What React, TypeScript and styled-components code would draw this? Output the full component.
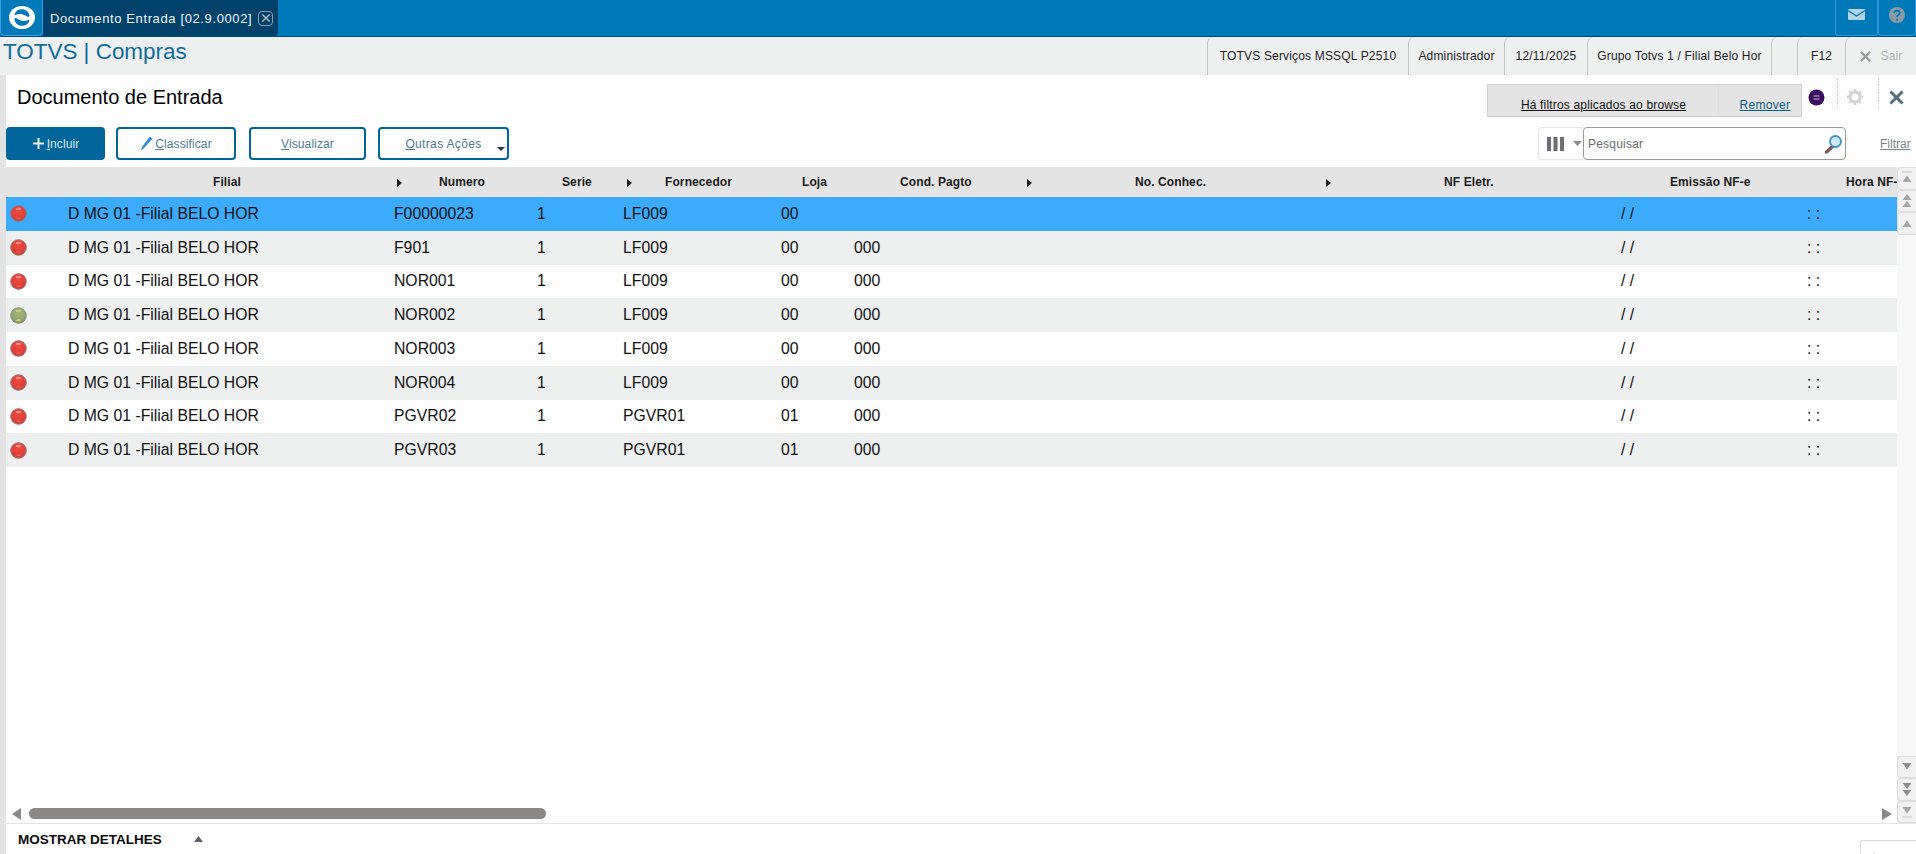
import React from "react";
import styled, { createGlobalStyle } from "styled-components";

const Global = createGlobalStyle`
  html, body { margin: 0; padding: 0; height: 100%; overflow: hidden; background: #eef0f0; }
  * { box-sizing: border-box; }
  body { font-family: "Liberation Sans", Arial, sans-serif; }
`;

const Page = styled.div`
  width: 1916px; height: 854px; display: flex; flex-direction: column; overflow: hidden;
`;

/* ---------- top bar ---------- */
const TopBar = styled.header`
  height: 37px; flex: none; display: flex; background: #0079b8; border-bottom: 1px solid #004a73;
`;
const LogoTile = styled.div`
  width: 43px; height: 36px; display: flex; align-items: center; justify-content: center;
  border: 1px solid #3a9fdc; border-top: none; border-radius: 0 0 5px 5px; background: #0079b8;
`;
const Tab = styled.div`
  width: 235px; height: 36px; display: flex; align-items: center; padding-left: 7px; gap: 6px;
  background: #00426b; color: #f2f6f8; font-size: 13px; letter-spacing: .62px; white-space: nowrap;
  border-radius: 0 0 4px 0;
`;
const TabClose = styled.span`
  width: 15px; height: 15px; display: flex; align-items: center; justify-content: center;
  border: 1.5px solid #8e9aa3; border-radius: 4px; color: #a9b3ba;
`;
const TopRight = styled.div`
  margin-left: auto; display: flex;
`;
const TopBtn = styled.div<{ $w: number }>`
  width: ${(p) => p.$w}px; height: 36px; display: flex; align-items: center; justify-content: center; padding-bottom: 6px;
  border: 1px solid #2b97d6; border-top: none; border-radius: 0 0 4px 4px;
`;

/* ---------- sub bar ---------- */
const SubBar = styled.div`
  height: 38px; flex: none; display: flex; background: #eef0f0;
`;
const Brand = styled.div`
  padding: 0 0 0 3px; font-size: 22.45px; line-height: 29px; color: #0f6c9c; white-space: nowrap;
`;
const InfoCells = styled.div`
  margin-left: auto; display: flex;
`;
const InfoCell = styled.div<{ $w: number; $muted?: boolean }>`
  width: ${(p) => p.$w}px; height: 38px; display: flex; align-items: center; justify-content: center; gap: 8px;
  border-left: 1px solid #c4c6c6; border-radius: 6px 0 0 0; font-size: 12px; letter-spacing: .17px;
  color: ${(p) => (p.$muted ? "#b4b8b8" : "#222")}; white-space: nowrap;
`;

/* ---------- main ---------- */
const Main = styled.div`
  flex: 1; min-height: 0; display: flex;
`;
const LeftStrip = styled.div`
  width: 6px; flex: none; background: #e3e3e3;
`;
const Content = styled.div`
  flex: 1; min-width: 0; display: flex; flex-direction: column; background: #fdfdfd;
`;
const TitleRow = styled.div`
  height: 52px; flex: none; display: flex; padding-left: 11px;
`;
const Title = styled.h1`
  margin: 9px 0 0; font-size: 20px; font-weight: 400; line-height: 26px; color: #000;
`;
const TitleTools = styled.div`
  margin-left: auto; display: flex; align-items: flex-start; padding-top: 9px;
`;
const FilterNotice = styled.div`
  width: 315px; height: 33px; display: flex; background: #e4e4e4; border: 1px solid #cfcfcf; font-size: 12px; letter-spacing: .17px;
`;
const NoticeMain = styled.a`
  width: 231px; display: flex; align-items: flex-end; justify-content: center; padding: 0 0 3px 1px;
  color: #111; text-decoration: underline; border-right: 1px dotted #dadada; line-height: 16px;
`;
const NoticeLink = styled.a`
  flex: 1; display: flex; align-items: flex-end; justify-content: center; padding-bottom: 3px; padding-left: 10px;
  color: #0b5c85; text-decoration: underline; line-height: 16px; letter-spacing: .3px;
`;
const ToolIcon = styled.div<{ $w: number; $line?: boolean; $right?: number }>`
  width: ${(p) => p.$w}px; height: 30px; margin-top: -6px; display: flex; align-items: flex-end; justify-content: center;
  padding: 0 ${(p) => p.$right ?? 6}px 2px 0;
  border-left: ${(p) => (p.$line ? "1px dotted #d0d0d0" : "none")};
`;

/* ---------- toolbar ---------- */
const Toolbar = styled.div`
  height: 33px; flex: none; display: flex; align-items: stretch; margin-bottom: 7px;
`;
const Btn = styled.button<{ $w: number; $gap: number; $primary?: boolean; $track?: number }>`
  position: relative; width: ${(p) => p.$w}px; margin-right: ${(p) => p.$gap}px; padding: 0;
  display: flex; align-items: center; justify-content: center; gap: 2px;
  border: 2px solid #00659a; border-radius: 4px; font: 12px "Liberation Sans", Arial, sans-serif;
  letter-spacing: ${(p) => p.$track ?? 0.1}px;
  background: ${(p) => (p.$primary ? "#00659a" : "#fdfdfd")};
  color: ${(p) => (p.$primary ? "#dfeaf0" : "#4d7c96")};
`;
const Caret = styled.span`
  position: absolute; right: 2px; bottom: 7px; width: 0; height: 0;
  border-left: 4px solid transparent; border-right: 4px solid transparent; border-top: 4px solid #1d3a4a;
`;
const SearchGroup = styled.div`
  margin-left: auto; display: flex; align-items: stretch;
`;
const ColumnsBtn = styled.div`
  width: 45px; display: flex; align-items: center; padding-left: 8px; gap: 9px;
  border: 1px solid #e8e8e8; border-right: none; border-radius: 4px 0 0 4px;
`;
const SearchBox = styled.div`
  width: 263px; display: flex; align-items: center; justify-content: space-between; padding: 0 2px 0 4px;
  border: 1px solid #9a9a9a; border-radius: 4px; font-size: 12px; color: #6b6f72; letter-spacing: .2px;
`;
const FilterLink = styled.a`
  width: 70px; padding-left: 34px; display: flex; align-items: center; font-size: 12px; color: #7d8488; text-decoration: underline;
`;

/* ---------- grid ---------- */
const GridWrap = styled.div`
  flex: 1; min-height: 0; display: flex;
`;
const GridArea = styled.div`
  flex: 1; min-width: 0; display: flex; flex-direction: column; overflow: hidden;
`;
const HeadRow = styled.div`
  height: 30px; flex: none; display: flex; background: #e4e4e4;
`;
const HeadCell = styled.div<{ $w: number; $pad: number }>`
  width: ${(p) => p.$w}px; flex: none; padding-left: ${(p) => p.$pad}px; display: flex; align-items: center;
  font-size: 12px; font-weight: 700; color: #1a1a1a; white-space: nowrap; overflow: hidden; letter-spacing: .1px;
`;
const SortMark = styled.span<{ $gap: number }>`
  flex: none; width: 0; height: 0; margin-right: ${(p) => p.$gap}px; margin-top: 2px;
  border-top: 4px solid transparent; border-bottom: 4px solid transparent; border-left: 5px solid #1a1a1a;
`;
const Row = styled.div<{ $tone: "sel" | "alt" | "plain" }>`
  height: 33.75px; flex: none; display: flex; align-items: center;
  background: ${(p) => (p.$tone === "sel" ? "#3dabfb" : p.$tone === "alt" ? "#eef0f0" : "#fdfdfd")};
`;
const Cell = styled.div<{ $w: number; $pad: number }>`
  width: ${(p) => p.$w}px; flex: none; padding-left: ${(p) => p.$pad}px; font-size: 15.75px; line-height: 20px;
  color: #111; white-space: nowrap; overflow: hidden;
`;
const Spacer = styled.div`
  flex: 1;
`;
const HScroll = styled.div`
  height: 15px; flex: none; display: flex; padding: 0 5px 4px 6px; align-items: center;
`;
const Thumb = styled.div`
  width: 517px; height: 11px; margin-left: 8px; border-radius: 6px; background: #8a8886;
`;
const EndArrow = styled.div`
  margin-left: auto;
`;
const Rail = styled.div`
  width: 19px; flex: none; display: flex; flex-direction: column; justify-content: space-between; background: #f8f8f8;
`;
const RailGroup = styled.div`
  display: flex; flex-direction: column;
`;
const RailBtn = styled.div`
  height: 22.5px; display: flex; align-items: center; justify-content: center; background: #f1f1f1;
  border: 1px solid #dcdcdc; border-right: none; border-radius: 4px 0 0 4px;
`;

/* ---------- footer ---------- */
const Footer = styled.footer`
  position: relative; height: 31px; flex: none; display: flex; align-items: center; padding: 0 0 0 12px; gap: 32px;
  background: #fdfdfd; border-top: 1px solid #e4e4e4; font-size: 13.5px; font-weight: 700; color: #0c0c0c;
`;
const FooterCorner = styled.div`
  position: absolute; right: 0; bottom: 0; width: 56px; height: 14px; padding: 7px 0 0 9px; background: #fff;
  border: 1px solid #d8d8d8; border-right: none; border-bottom: none; border-radius: 3px 0 0 0;
`;

/* ---------- drawings ---------- */
const LOGO_CUT = "M6.500 9.500C7.500 6 10.500 4.200 14 4.200c3.800 0 6.800 2.300 7.500 6.300.1 1.300-1 1.700-2 1.200-1.800-.9-3.300-2-5.500-2.500-2.200-.5-4-.2-5.800.5-1.200.5-2 .9-1.700-.2z";
const Logo = () => (
  <svg width="28" height="25" viewBox="0 0 28 25">
    <ellipse cx="14" cy="12.500" rx="13" ry="11.500" fill="#fff" />
    <path d={LOGO_CUT} fill="#0079b8" />
    <path d={LOGO_CUT} fill="#0079b8" transform="rotate(180 14 12.500)" />
  </svg>
);
const X = ({ s, c, w }: { s: number; c: string; w: number }) => (
  <svg width={s} height={s} viewBox="0 0 14 14">
    <path d="M2 2l10 10M12 2L2 12" stroke={c} strokeWidth={w} fill="none" />
  </svg>
);
const Mail = () => (
  <svg width="17" height="11" viewBox="0 0 17 11">
    <rect width="17" height="11" rx="1" fill="#b4d4e6" />
    <path d="M0 1.500l8.500 5.500L17 1.500" stroke="#0079b8" strokeWidth="1.400" fill="none" />
  </svg>
);
const Help = () => (
  <svg width="16" height="16" viewBox="0 0 16 16">
    <circle cx="8" cy="8" r="8" fill="#8b9ba6" />
    <path d="M5.200 6c0-3.200 5.600-3.200 5.600 0 0 2-2.800 2-2.800 4" stroke="#0079b8" strokeWidth="1.800" fill="none" />
    <circle cx="8" cy="12.800" r="1.100" fill="#0079b8" />
  </svg>
);
const Gear = () => (
  <svg width="18" height="18" viewBox="0 0 18 18">
    <circle cx="9" cy="9" r="5" fill="none" stroke="#d2d2d2" strokeWidth="3" />
    <path d="M9 1v3M9 14v3M1 9h3M14 9h3M3.300 3.300l2.200 2.200M12.500 12.500l2.200 2.200M14.700 3.300l-2.200 2.200M5.500 12.500l-2.200 2.200" stroke="#d2d2d2" strokeWidth="2.400" />
  </svg>
);
const Badge = () => (
  <svg width="17" height="17" viewBox="0 0 17 17">
    <circle cx="8.500" cy="8.500" r="8" fill="#3a0f5e" />
    <path d="M5.500 7h6M5.500 10h6" stroke="#c9bcd6" strokeWidth="1.200" />
  </svg>
);
const Plus = () => (
  <svg width="13" height="13" viewBox="0 0 13 13">
    <path d="M6.500 1v11M1 6.500h11" stroke="#e8f0f4" strokeWidth="2" />
  </svg>
);
const Pencil = () => (
  <svg width="13" height="15" viewBox="0 0 13 15">
    <path d="M10 .5l2.500 2.200L3.800 12.200 .5 14.500l1.600-3.800z" fill="#2e8fd0" />
  </svg>
);
const ColumnsIcon = () => (
  <svg width="17" height="14" viewBox="0 0 17 14">
    <path d="M0 0h4v14H0zM6.500 0h4v14h-4zM13 0h4v14h-4z" fill="#6d6d74" />
  </svg>
);
const Tri = ({ dir, w = 9, h = 9, c = "#8d8d8d" }: { dir: "u" | "d" | "l" | "r"; w?: number; h?: number; c?: string }) => {
  const d = { u: "M0 10L5 0l5 10z", d: "M0 0h10L5 10z", l: "M10 0v10L0 5z", r: "M0 0v10l10-5z" }[dir];
  return (
    <svg width={w} height={h} viewBox="0 0 10 10" preserveAspectRatio="none" style={{ display: "block", flex: "none" }}>
      <path d={d} fill={c} />
    </svg>
  );
};
const RailIcon = ({ kind }: { kind: string }) => (
  <svg width="12" height="15" viewBox="0 0 12 15">
    {kind === "top" && <><path d="M1 1h10" stroke="#c9b9ae" /><path d="M1.500 11L6 4.500l4.500 6.500z" fill="#a5a5a8" /></>}
    {kind === "pgup" && <><path d="M1.500 7L6 1l4.500 6z" fill="#a5a5a8" /><path d="M1.500 14L6 8l4.500 6z" fill="#a5a5a8" /></>}
    {kind === "up" && <path d="M1.500 11L6 4.500l4.500 6.500z" fill="#a5a5a8" />}
    {kind === "down" && <path d="M1.500 4L6 10.500 10.500 4z" fill="#8f8f92" />}
    {kind === "pgdn" && <><path d="M1.500 1L6 7l4.500-6z" fill="#8f8f92" /><path d="M1.500 8L6 14l4.500-6z" fill="#8f8f92" /></>}
    {kind === "bottom" && <><path d="M1.500 3L6 9.500 10.500 3z" fill="#a5a5a8" /><path d="M1 13h10" stroke="#c9c9c9" /></>}
  </svg>
);
const Magnifier = () => (
  <svg width="19" height="20" viewBox="0 0 19 20">
    <path d="M9 12l-6.500 6" stroke="#7d5a5a" strokeWidth="3.400" strokeLinecap="round" />
    <circle cx="11.500" cy="7.500" r="5.500" fill="#cfe9f8" stroke="#3f93c9" strokeWidth="1.800" />
  </svg>
);
const Ball = ({ green, id }: { green?: boolean; id: string }) => (
  <svg width="17" height="17" viewBox="0 0 17 17" style={{ display: "block" }}>
    <defs>
      <radialGradient id={id} cx=".5" cy=".35" r=".65">
        <stop offset="0" stopColor={green ? "#a3b47a" : "#ee4b42"} />
        <stop offset=".7" stopColor={green ? "#8fa66c" : "#e03e36"} />
        <stop offset="1" stopColor={green ? "#7f8f66" : "#b8443f"} />
      </radialGradient>
    </defs>
    <circle cx="8.500" cy="8.500" r="7.800" fill={`url(#${id})`} stroke={green ? "#8f9488" : "#96787a"} strokeWidth="1" />
    <ellipse cx="8.500" cy="4" rx="2.800" ry="1.300" fill={green ? "#c9cc7e" : "#f28a80"} />
    <ellipse cx="8.500" cy="13.200" rx="2.300" ry="1" fill={green ? "#e0d27a" : "#ee5a52"} />
  </svg>
);

/* ---------- data ---------- */
const columns = [
  { w: 56, head: 0, body: 4, label: "" },
  { w: 330, head: 151, body: 6, label: "Filial" },
  { w: 140, head: 5, body: 2, label: "Numero", sort: 37 },
  { w: 90, head: 30, body: 5, label: "Serie" },
  { w: 154, head: 5, body: 1, label: "Fornecedor", sort: 33 },
  { w: 76, head: 26, body: 5, label: "Loja" },
  { w: 168, head: 48, body: 2, label: "Cond. Pagto" },
  { w: 300, head: 7, body: 2, label: "No. Conhec.", sort: 103 },
  { w: 300, head: 6, body: 2, label: "NF Eletr.", sort: 113 },
  { w: 180, head: 50, body: 1, label: "Emissão NF-e" },
  { w: 97, head: 46, body: 7, label: "Hora NF-e" },
];

const rows = [
  { num: "F00000023", forn: "LF009", loja: "00", cond: "" },
  { num: "F901", forn: "LF009", loja: "00", cond: "000" },
  { num: "NOR001", forn: "LF009", loja: "00", cond: "000" },
  { num: "NOR002", forn: "LF009", loja: "00", cond: "000", green: true },
  { num: "NOR003", forn: "LF009", loja: "00", cond: "000" },
  { num: "NOR004", forn: "LF009", loja: "00", cond: "000" },
  { num: "PGVR02", forn: "PGVR01", loja: "01", cond: "000" },
  { num: "PGVR03", forn: "PGVR01", loja: "01", cond: "000" },
];

export default function App() {
  return (
    <Page>
      <Global />
      <TopBar>
        <LogoTile><Logo /></LogoTile>
        <Tab>
          Documento Entrada [02.9.0002]
          <TabClose><X s={10} c="#b3bcc2" w={2} /></TabClose>
        </Tab>
        <TopRight>
          <TopBtn $w={43}><Mail /></TopBtn>
          <TopBtn $w={38}><Help /></TopBtn>
        </TopRight>
      </TopBar>

      <SubBar>
        <Brand>TOTVS | Compras</Brand>
        <InfoCells>
          <InfoCell $w={201}>TOTVS Serviços MSSQL P2510</InfoCell>
          <InfoCell $w={96}>Administrador</InfoCell>
          <InfoCell $w={83}>12/11/2025</InfoCell>
          <InfoCell $w={184}>Grupo Totvs 1 / Filial Belo Hor</InfoCell>
          <InfoCell $w={26} />
          <InfoCell $w={48}>F12</InfoCell>
          <InfoCell $w={71} $muted><X s={13} c="#9a9c9e" w={2.4} />Sair</InfoCell>
        </InfoCells>
      </SubBar>

      <Main>
        <LeftStrip />
        <Content>
          <TitleRow>
            <Title>Documento de Entrada</Title>
            <TitleTools>
              <FilterNotice>
                <NoticeMain>Há filtros aplicados ao browse</NoticeMain>
                <NoticeLink>Remover</NoticeLink>
              </FilterNotice>
              <ToolIcon $w={35}><Badge /></ToolIcon>
              <ToolIcon $w={41} $line><Gear /></ToolIcon>
              <ToolIcon $w={38} $line $right={3}><X s={17} c="#54707f" w={2.400} /></ToolIcon>
            </TitleTools>
          </TitleRow>

          <Toolbar>
            <Btn $w={99} $gap={11} $primary><Plus /><span><u>I</u>ncluir</span></Btn>
            <Btn $w={120} $gap={13}><Pencil /><span><u>C</u>lassificar</span></Btn>
            <Btn $w={117} $gap={12}><span><u>V</u>isualizar</span></Btn>
            <Btn $w={131} $gap={0} $track={0.35}><span><u>O</u>utras Ações</span><Caret /></Btn>
            <SearchGroup>
              <ColumnsBtn><ColumnsIcon /><Tri dir="d" w={9} h={5} c="#8b8b90" /></ColumnsBtn>
              <SearchBox>Pesquisar<Magnifier /></SearchBox>
              <FilterLink>Filtrar</FilterLink>
            </SearchGroup>
          </Toolbar>

          <GridWrap>
            <GridArea>
              <HeadRow>
                {columns.map((c, i) => (
                  <HeadCell key={i} $w={c.w} $pad={c.head}>
                    {c.sort ? <SortMark $gap={c.sort} /> : null}
                    {c.label}
                  </HeadCell>
                ))}
              </HeadRow>
              {rows.map((r, i) => {
                const values: React.ReactNode[] = [
                  <Ball key="b" green={r.green} id={`ball${i}`} />,
                  "D MG 01 -Filial BELO HOR",
                  r.num,
                  "1",
                  r.forn,
                  r.loja,
                  r.cond,
                  "",
                  "",
                  "/ /",
                  ": :",
                ];
                return (
                  <Row key={r.num} $tone={i === 0 ? "sel" : i % 2 === 1 ? "alt" : "plain"}>
                    {values.map((v, j) => (
                      <Cell key={j} $w={columns[j].w} $pad={columns[j].body}>{v}</Cell>
                    ))}
                  </Row>
                );
              })}
              <Spacer />
              <HScroll>
                <Tri dir="l" w={9} h={12} c="#8a8886" />
                <Thumb />
                <EndArrow><Tri dir="r" w={10} h={12} c="#8a8886" /></EndArrow>
              </HScroll>
            </GridArea>
            <Rail>
              <RailGroup>
                <RailBtn><RailIcon kind="top" /></RailBtn>
                <RailBtn><RailIcon kind="pgup" /></RailBtn>
                <RailBtn><RailIcon kind="up" /></RailBtn>
              </RailGroup>
              <RailGroup>
                <RailBtn><RailIcon kind="down" /></RailBtn>
                <RailBtn><RailIcon kind="pgdn" /></RailBtn>
                <RailBtn><RailIcon kind="bottom" /></RailBtn>
              </RailGroup>
            </Rail>
          </GridWrap>

          <Footer>
            MOSTRAR DETALHES
            <Tri dir="u" w={9} h={6} c="#5f5f68" />
            <FooterCorner><svg width="8" height="7" viewBox="0 0 8 7"><circle cx="4" cy="4" r="3" fill="none" stroke="#999" /></svg></FooterCorner>
          </Footer>
        </Content>
      </Main>
    </Page>
  );
}
